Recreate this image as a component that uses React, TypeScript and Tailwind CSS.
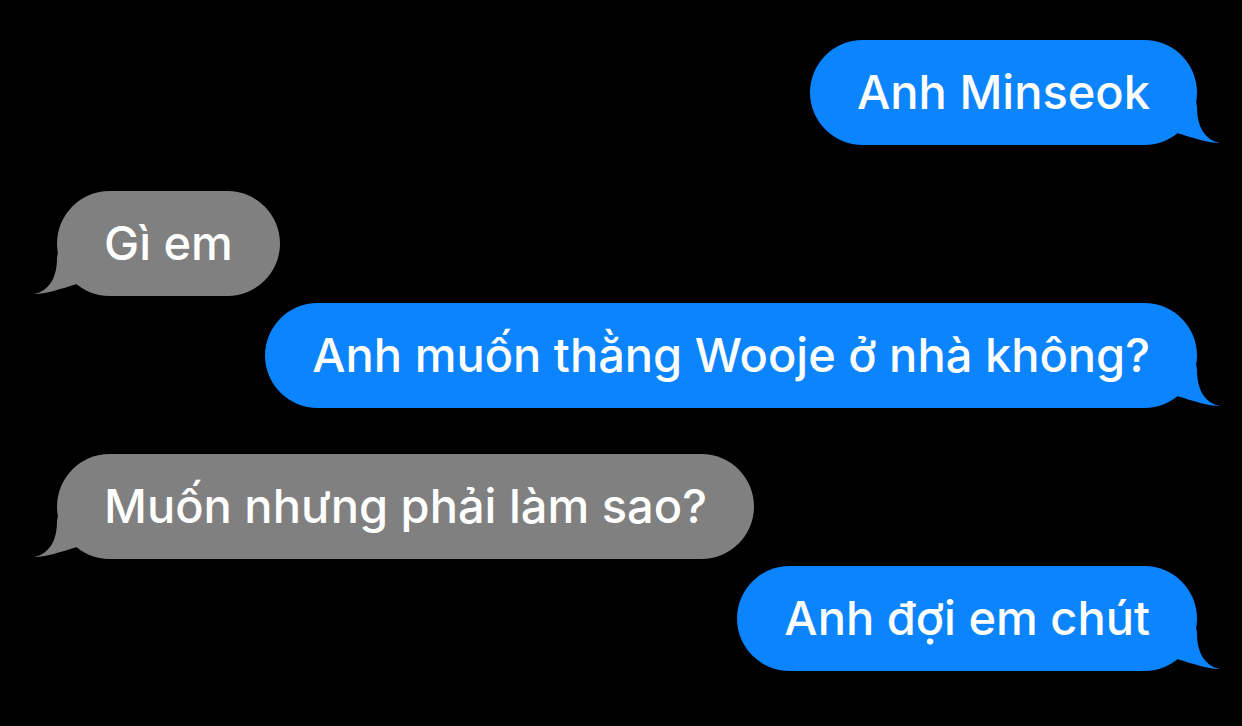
const MESSAGES = [
  { id: 1, me: true, text: "Anh Minseok", gap: "mt-0" },
  { id: 2, me: false, text: "Gì em", gap: "mt-[46px]" },
  { id: 3, me: true, text: "Anh muốn thằng Wooje ở nhà không?", gap: "mt-[7px]" },
  { id: 4, me: false, text: "Muốn nhưng phải làm sao?", gap: "mt-[46px]" },
  { id: 5, me: true, text: "Anh đợi em chút", gap: "mt-[7px]" },
];

function Tail({ me }: { me: boolean }) {
  // iMessage style tail, drawn for the right side and mirrored for the left
  return (
    <svg
      width="50"
      height="50"
      viewBox="0 0 50 50"
      className={
        me
          ? "absolute bottom-0 right-[-24px]"
          : "absolute bottom-0 left-[-24px] -scale-x-100"
      }
    >
      <path
        d="M24 0 L26 12 C26 32 34 45 49 48 C38 48 22 43 6 38 L0 20 L0 0 Z"
        fill={me ? "#0b84fe" : "#808080"}
      />
    </svg>
  );
}

export default function App() {
  return (
    <div className="w-[1242px] h-[726px] bg-black overflow-hidden pt-[40px] pl-[57px] pr-[45px] flex flex-col font-['Inter','Liberation_Sans',sans-serif]">
      {MESSAGES.map((m) => (
        <div key={m.id} className={`flex ${m.me ? "justify-end" : "justify-start"} ${m.gap}`}>
          <div
            className={`relative h-[105px] px-[47px] rounded-full flex items-center text-white text-[47px] font-medium ${
              m.me ? "bg-[#0b84fe]" : "bg-[#808080]"
            }`}
          >
            <Tail me={m.me} />
            <span className="relative whitespace-nowrap">{m.text}</span>
          </div>
        </div>
      ))}
    </div>
  );
}
